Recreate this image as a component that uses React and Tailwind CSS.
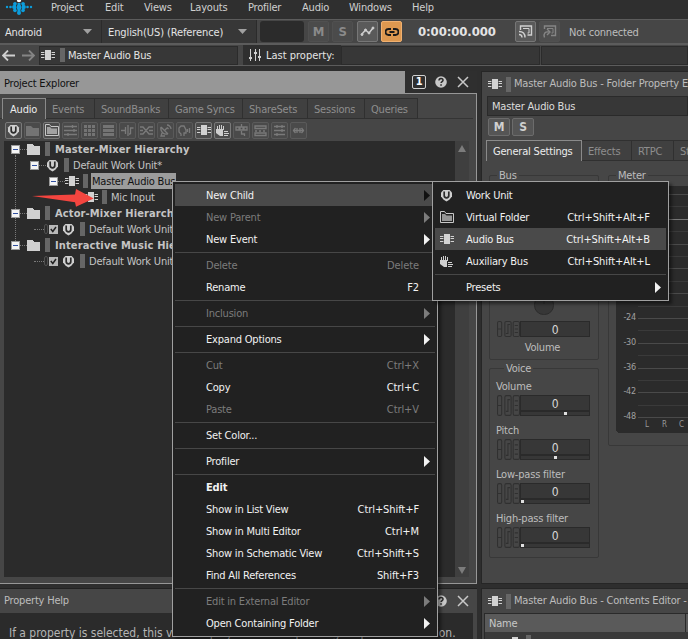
import React from 'react';
import clsx from 'clsx';

const BusIcon = ({ className = 'text-[#d2d2d2]' }) => (
  <svg width="14" height="10" viewBox="0 0 14 10" fill="currentColor" shapeRendering="crispEdges" className={clsx('shrink-0', className)}>
    <path d="M4 0h6v10H4z" />
    <path d="M0 2h3v1H0zM0 4h3v1H0zM0 7h3v1H0zM11 2h3v1h-3zM11 4h3v1h-3zM11 7h3v1h-3z" />
    <path d="M3 2h1v1H3zM3 4h1v1H3zM3 7h1v1H3zM10 2h1v1h-1zM10 4h1v1h-1zM10 7h1v1h-1z" opacity=".4" />
  </svg>
);

const WorkUnitIcon = ({ className = 'text-[#cfcfcf]' }) => (
  <svg width="13" height="13" viewBox="0 0 13 13" className={clsx('shrink-0', className)}>
    <path d="M3.4 1h6.2L12 3.600v4L9.300 10.800 6.500 12.500 3.700 10.800 1 7.600v-4z" fill="currentColor" />
    <path d="M4.200 2.500v4a2.300 2.300 0 0 0 4.600 0v-4" fill="none" stroke="#2b2b2b" strokeWidth="1.700" />
    <path d="M5.800 1h1.400v5H5.800z" fill="currentColor" />
  </svg>
);

const FolderIcon = () => (
  <svg width="14" height="12" viewBox="0 0 14 12" shapeRendering="crispEdges" className="shrink-0">
    <path d="M0 1h5l2 2h6v9H0z" fill="#d0d0d0" />
  </svg>
);

const VirtualFolderIcon = ({ className = 'text-[#c8c8c8]' }) => (
  <svg width="14" height="12" viewBox="0 0 14 12" className={clsx('shrink-0', className)}>
    <path d="M.5 11.500v-11h4l1.500 2h7.500v9z" fill="none" stroke="currentColor" />
    <path d="M2 3h3l1.500 1.500H12V10H2z" fill="currentColor" opacity=".7" />
  </svg>
);

const HandIcon = ({ className = 'text-[#cfcfcf]' }) => (
  <svg width="13" height="13" viewBox="0 0 13 13" fill="currentColor" className={clsx('shrink-0', className)}>
    <path d="M1 2h1v4H1zM3 1h1v5H3zM5 1h1v5H5zM7 2h1v4H7z" />
    <path d="M0 5h7v7H4L0 9z" />
    <path d="M8 7h4v1H8zM8 9h5v1H8zM8 11h4v1H8z" />
  </svg>
);

const toolPaths = {
  mixer: 'M0 2.500h13M0 6.500h13M0 10.500h13M8.500 1v3M10 5v3M4 9v3',
  notes: 'M0 6.500h4M4.500 3v7M7 1v11M9.500 10V4h3M9.500 10H8',
  cross: 'M0 3h3l6 7h4M0 10h3l6-7h4M0 6.500h3M9 6.500h4',
  dish: 'M2 3c-1 5 3 8 7 7M2 3l7 7M6 6l2-2M8 1c2 0 4 2 4 4M8 3.500l1.500 1.500M3 9l-1 3h4',
  voice: 'M6 12V9h2V6L6 2H3L1 4v4l2 2v2M9.500 5v3M11.500 4v5',
  nodes: 'M1 3h3v3H1zM5 3h3v3H5zM9 3h3v3H9zM6.500 0v3M6.500 7v3h3v2',
  split: 'M1 2h11v2.500H1zM1 9h11v2.500H1zM1 7h2M5 7h2M9 7h2',
  faders: 'M1 2.500h11M1 6.500h11M1 10.500h11M4 1v3M9 5v3M4 9v3M9 1v3',
  arrows: 'M1 6.500h11M3.500 4L1.500 6.500 3.500 9M9.500 4l2 2.500L9.500 9M5 4v5M8 4v5',
};

const ToolGlyph = ({ name }) => (
  <svg width="13" height="13" viewBox="0 0 13 13" fill="none" stroke="currentColor" strokeWidth="1.300" className="shrink-0 text-[#7a7a7a]">
    <path d={toolPaths[name]} />
  </svg>
);

const GridGlyph = () => (
  <svg width="13" height="13" viewBox="0 0 13 13" fill="#747474" shapeRendering="crispEdges">
    {[1, 5, 9].map((y) => [1, 5, 9].map((x) => <rect key={`${x}-${y}`} x={x} y={y} width="3" height="3" />))}
  </svg>
);

const RowsGlyph = () => (
  <svg width="13" height="13" viewBox="0 0 13 13" fill="#747474" shapeRendering="crispEdges">
    <path d="M1 1h11v3H1zM1 5h11v3H1zM1 9h11v3H1z" />
  </svg>
);

const HelpIcon = () => (
  <svg width="12" height="12" viewBox="0 0 13 13" className="shrink-0">
    <circle cx="6.500" cy="6.500" r="6.300" fill="#c8c8c8" />
    <path d="M4.300 5c0-3 4.400-3 4.400-.4 0 1.500-2.100 1.500-2.100 3.100" fill="none" stroke="#2b2b2b" strokeWidth="1.600" />
    <path d="M5.700 9h1.700v1.600H5.700z" fill="#2b2b2b" />
  </svg>
);

const CloseIcon = () => (
  <svg width="12" height="12" viewBox="0 0 12 12" className="shrink-0">
    <path d="M1 1l10 10M11 1L1 11" stroke="#c8c8c8" strokeWidth="1.500" />
  </svg>
);

const Logo = () => (
  <svg width="34" height="19" viewBox="0 0 34 19" fill="#0d9ddb">
    <circle cx="7" cy="7" r="1.200" />
    <circle cx="10.500" cy="7" r="1.300" />
    <circle cx="14" cy="7" r="1.900" />
    <path d="M13.500 3h2.500v8h-2.500z" />
    <circle cx="15" cy="3.700" r="1.800" />
    <circle cx="15" cy="10.500" r="1.800" />
    <path d="M17.500 3h3v11h-3z" />
    <circle cx="19" cy="7.200" r="2.500" />
    <circle cx="19" cy="13" r="1.900" />
    <circle cx="23" cy="3.700" r="1.800" />
    <circle cx="23" cy="10.500" r="1.800" />
    <path d="M22 3h2.500v8H22z" />
    <circle cx="24" cy="7" r="1.900" />
    <circle cx="27.500" cy="7" r="1.300" />
    <circle cx="31" cy="7" r="1.200" />
    <circle cx="19" cy="0" r="2.200" fill="#fff" />
  </svg>
);

const ColorBar = () => <span className="h-[14px] w-[5px] shrink-0 bg-[#666]" />;

const Caret = () => (
  <svg width="9" height="5" viewBox="0 0 9 5" className="shrink-0">
    <path d="M0 0h9L4.500 5z" fill="#a0a0a0" />
  </svg>
);

const menus = [
  { label: 'Project', width: 'w-[54px]' },
  { label: 'Edit', width: 'w-[39px]' },
  { label: 'Views', width: 'w-[46px]' },
  { label: 'Layouts', width: 'w-[58px]' },
  { label: 'Profiler', width: 'w-[54px]' },
  { label: 'Audio', width: 'w-[47px]' },
  { label: 'Windows', width: 'w-[63px]' },
  { label: 'Help', width: 'w-[40px]' },
];

const MenuBar = () => (
  <div className="flex h-[19px] shrink-0 bg-[#2f2f2f] text-[#cfcfcf]">
    <div className="w-[51px] shrink-0">
      <Logo />
    </div>
    {menus.map((m) => (
      <span key={m.label} className={clsx('shrink-0 leading-[16px]', m.width)}>
        {m.label}
      </span>
    ))}
  </div>
);

const SquareButton = ({ children, className }) => (
  <div className={clsx('flex shrink-0 items-center justify-center rounded-[2px] border', className)}>{children}</div>
);

const Toolbar = () => (
  <div className="flex h-[26px] shrink-0 items-start border-t border-b-2 border-t-[#5c5c5c] border-b-[#5c5c5c] bg-[#464646]">
    <div className="flex h-[23px] w-[102px] shrink-0 items-center justify-between border-r border-[#2b2b2b] bg-[#373737] pr-[9px] pl-[5px] text-[#e4e4e4]">
      <span className="pt-[3px]">Android</span>
      <Caret />
    </div>
    <div className="flex h-[23px] w-[155px] shrink-0 items-center justify-between border-r border-[#2b2b2b] bg-[#373737] pr-[9px] pl-[6px] text-[#e4e4e4]">
      <span className="pt-[3px] tracking-[-0.1px]">English(US) (Reference)</span>
      <Caret />
    </div>
    <div className="mt-px ml-[3px] h-[21px] w-[44px] shrink-0 rounded-[3px] bg-[#2b2b2b]" />
    <SquareButton className="mt-px ml-1 h-[21px] w-[21px] border-[#505050] bg-[#4b4b4b] text-[13px] font-bold text-[#8a8a8a]">M</SquareButton>
    <SquareButton className="mt-px ml-[3px] h-[21px] w-[21px] border-[#505050] bg-[#4b4b4b] text-[13px] font-bold text-[#8a8a8a]">S</SquareButton>
    <SquareButton className="mt-px ml-[4px] h-[21px] w-[21px] border-[#777] bg-[#5a5a5a]">
      <svg width="15" height="11" viewBox="0 0 15 11" fill="#d0d0d0" stroke="#d0d0d0">
        <path d="M2 8l3.500-4L9 7l4-5" fill="none" strokeWidth="1.500" />
        <circle cx="2" cy="8.500" r="1" />
        <circle cx="5.500" cy="4" r="1" />
        <circle cx="9" cy="7" r="1" />
        <circle cx="13" cy="2" r="1" />
      </svg>
    </SquareButton>
    <SquareButton className="mt-px ml-[3px] h-[21px] w-[21px] border-[#f0b070] bg-[#dd9850]">
      <svg width="14" height="8" viewBox="0 0 14 8" fill="none" stroke="#1a1a1a" strokeWidth="1.800">
        <path d="M6 1H3.500a2.700 2.700 0 0 0 0 6H6M8 1h2.500a2.700 2.700 0 0 1 0 6H8M4.500 4h5" />
      </svg>
    </SquareButton>
    <span className="ml-[16px] w-[96px] shrink-0 text-[13px] leading-[24px] font-bold tracking-[-0.1px] text-[#e4e4e4]">0:00:00.000</span>
    <SquareButton className="mt-px ml-px h-[21px] w-[21px] border-[#777] bg-[#5a5a5a]">
      <svg width="15" height="13" viewBox="0 0 15 13" fill="none" stroke="#d0d0d0" strokeWidth="1.400">
        <path d="M2.500 5V1h11v9H9.500" />
        <path d="M5 3.500h6v4.500H9.500" strokeWidth="1" />
        <path d="M1 6.500c4 0 6 2.500 6 6M1 9.500c2 0 3 1 3 3" />
      </svg>
    </SquareButton>
    <SquareButton className="mt-px ml-[3px] h-[21px] w-[21px] border-[#505050] bg-[#4e4e4e]">
      <svg width="15" height="13" viewBox="0 0 15 13" fill="none" stroke="#858585" strokeWidth="1.400">
        <path d="M2.500 4V1h11v9.500H9" />
        <path d="M5 3.500h6v4.500H9.500" strokeWidth="1" />
        <path d="M2.500 12.500c-1.500-4 1-6 4-5.500M5 4l3 3-3 3" />
      </svg>
    </SquareButton>
    <span className="ml-[9px] leading-[25px] whitespace-nowrap text-[#bdbdbd]">Not connected</span>
  </div>
);

const NavArrow = ({ flip, className }) => (
  <svg width="13" height="11" viewBox="0 0 13 11" fill="none" stroke="currentColor" strokeWidth="1.800" className={clsx('shrink-0', flip && 'rotate-180', className)}>
    <path d="M6 .5L1 5.500l5 5M1 5.500h12" />
  </svg>
);

const SelectionBar = () => (
  <div className="flex h-[21px] shrink-0 items-center border-b border-[#5c5c5c] bg-[#464646]">
    <NavArrow className="ml-[2px] text-[#d0d0d0]" />
    <NavArrow flip className="ml-[7px] text-[#858585]" />
    <div className="ml-[4px] flex h-[19px] w-[199px] shrink-0 items-center border border-[#2b2b2b] bg-[#373737] pl-px text-[#e4e4e4]">
      <BusIcon />
      <span className="ml-[5px] h-[14px] w-[5px] shrink-0 bg-[#666]" />
      <span className="ml-[3px] pt-[2px]">Master Audio Bus</span>
    </div>
    <div className="ml-[5px] flex h-[20px] w-[98px] shrink-0 items-center bg-[#2f2f2f] pl-[6px] text-[#e4e4e4]">
      <svg width="12" height="12" viewBox="0 0 12 12" stroke="#d0d0d0" strokeWidth="1" shapeRendering="crispEdges">
        <path d="M1.500 0v12M6 0v12M10.500 0v12" />
        <path d="M0 8.500h3M4.500 3.500h3M9 7.500h3" strokeWidth="2" />
      </svg>
      <span className="ml-[5px] pt-[3px] tracking-[0px] whitespace-nowrap">Last property:</span>
    </div>
    <div className="h-[19px] w-[199px] shrink-0 border border-[#2b2b2b] bg-[#373737]" />
    <div className="ml-px h-[19px] flex-1 border border-[#2b2b2b] bg-[#373737]" />
  </div>
);

const explorerTabs = [
  { label: 'Events', width: 'w-[49px]' },
  { label: 'SoundBanks', width: 'w-[74px]' },
  { label: 'Game Syncs', width: 'w-[74px]' },
  { label: 'ShareSets', width: 'w-[65px]' },
  { label: 'Sessions', width: 'w-[57px]' },
  { label: 'Queries', width: 'w-[53px]' },
];

const tools = [
  { id: 'work', on: true, icon: <WorkUnitIcon /> },
  { id: 'folder', icon: <svg width="13" height="13" viewBox="0 0 13 13"><path d="M0 2h5l2 2h6v8H0z" fill="#747474" /></svg> },
  { id: 'virtual', on: true, icon: <VirtualFolderIcon /> },
  { id: 'mixer', icon: <ToolGlyph name="mixer" /> },
  { id: 'grid', icon: <GridGlyph /> },
  { id: 'rows', icon: <RowsGlyph /> },
  { id: 'notes', icon: <ToolGlyph name="notes" /> },
  { id: 'cross', icon: <ToolGlyph name="cross" /> },
  { id: 'dish', icon: <ToolGlyph name="dish" /> },
  { id: 'voice', icon: <ToolGlyph name="voice" /> },
  { id: 'bus', on: true, icon: <BusIcon /> },
  { id: 'aux', on: true, icon: <HandIcon /> },
  { id: 'nodes', icon: <ToolGlyph name="nodes" /> },
  { id: 'split', icon: <ToolGlyph name="split" /> },
  { id: 'faders', icon: <ToolGlyph name="faders" /> },
  { id: 'arrows', icon: <ToolGlyph name="arrows" /> },
];

const Expander = () => (
  <svg width="9" height="9" viewBox="0 0 9 9" shapeRendering="crispEdges" className="relative shrink-0">
    <path d="M0 0h9v9H0z" fill="#9a9a9a" />
    <path d="M1 1h7v7H1z" fill="#f4f4f4" />
    <path d="M2 4h5v1H2z" fill="#2f4fa0" />
  </svg>
);

const Dots = ({ className }) => <span className={clsx('h-px shrink-0 border-t border-dotted border-[#7a7a7a]', className)} />;

const CheckBox = () => (
  <svg width="14" height="11" viewBox="0 0 14 11" className="shrink-0">
    <rect x=".5" y=".5" width="3" height="9" rx="1.500" fill="none" stroke="#505050" />
    <rect x="5" y="1" width="9" height="9" fill="#b8b8b8" />
    <path d="M6.800 5l2 2.500L12 3" fill="none" stroke="#222" strokeWidth="1.500" />
  </svg>
);

const TreeRow = ({ indent, icon, label, bold, selected, check, lead = true }) => (
  <div className={clsx('flex h-[16px] items-center', indent)}>
    {check ? (
      <>
        <Dots className="w-[10px]" />
        <CheckBox />
        <span className="w-[4px]" />
      </>
    ) : (
      <>
        {lead ? <Expander /> : <span className="w-[9px]" />}
        <Dots className="w-[7px]" />
      </>
    )}
    <span className="flex w-[15px] shrink-0">{icon}</span>
    <span className="ml-[3px] flex">
      <ColorBar />
    </span>
    <span
      className={clsx(
        'h-[16px] px-px leading-[18px] whitespace-nowrap',
        bold ? 'ml-[4px] font-bold tracking-[0.13px]' : 'ml-[3px]',
        selected ? 'bg-[#9c9c9c] text-[#111]' : 'text-[#c4c4c4]'
      )}
    >
      {label}
    </span>
  </div>
);

const ScrollArrow = ({ down }) => (
  <svg width="8" height="7" viewBox="0 0 8 7" className={clsx('shrink-0', down && 'rotate-180')}>
    <path d="M4 0l4 7H0z" fill="#7c7c7c" />
  </svg>
);

const Explorer = () => (
  <div className="flex h-[513px] shrink-0 flex-col">
    <div className="flex h-[22px] shrink-0">
      <div className="flex w-[405px] items-center bg-[#979797] pl-[4px] text-[#111]">
        <span className="pt-[4px]">Project Explorer</span>
      </div>
      <div className="flex flex-1 items-center bg-[#2f2f2f] pl-[7px]">
        <span className="flex h-[14px] w-[14px] items-center justify-center rounded-[2px] border border-[#d0d0d0] text-[11px] font-bold text-white">1</span>
        <span className="ml-[9px]">
          <HelpIcon />
        </span>
        <span className="ml-[10px]">
          <CloseIcon />
        </span>
      </div>
    </div>
    <div className="flex flex-1 flex-col border-t border-r border-b border-[#979797] bg-[#464646]">
      <div className="mt-[4px] flex h-[21px] shrink-0">
        <div className="w-[2px] border-b border-[#343434]" />
        <div className="w-[44px] border-t border-r border-l border-[#8a8a8a] pl-[7px] leading-[21px] text-[#ececec]">Audio</div>
        {explorerTabs.map((t) => (
          <div key={t.label} className={clsx('border-t border-r border-b border-[#303030] bg-[#404040] pl-[6px] leading-[21px] whitespace-nowrap text-[#8e8e8e]', t.width)}>
            {t.label}
          </div>
        ))}
        <div className="mr-[3px] flex-1 border-b border-[#343434]" />
      </div>
      <div className="flex h-[22px] shrink-0 items-center gap-[2px] pl-[5px]">
        {tools.map((t) => (
          <div
            key={t.id}
            className={clsx(
              'flex h-[17px] w-[17px] shrink-0 items-center justify-center overflow-hidden rounded-[2px] border',
              t.on ? 'border-[#7a7a7a] bg-[#4c4c4c]' : 'border-[#5a5a5a] bg-[#4a4a4a]'
            )}
          >
            {t.icon}
          </div>
        ))}
      </div>
      <div className="mr-[7px] mb-[6px] ml-[4px] flex flex-1 bg-[#2b2b2b]">
        <div className="relative flex-1">
          <span className="absolute top-[14px] left-[11px] h-[86px] border-l border-dotted border-[#7a7a7a]" />
          <TreeRow indent="pl-[7px]" icon={<FolderIcon />} label="Master-Mixer Hierarchy" bold />
          <TreeRow indent="pl-[26px]" icon={<WorkUnitIcon />} label="Default Work Unit*" />
          <TreeRow indent="pl-[45px]" icon={<BusIcon />} label="Master Audio Bus" selected />
          <TreeRow indent="pl-[64px]" icon={<BusIcon />} label="Mic Input" lead={false} />
          <TreeRow indent="pl-[7px]" icon={<FolderIcon />} label="Actor-Mixer Hierarchy" bold />
          <TreeRow indent="pl-[30px]" icon={<WorkUnitIcon />} label="Default Work Unit" check />
          <TreeRow indent="pl-[7px]" icon={<FolderIcon />} label="Interactive Music Hierarchy" bold />
          <TreeRow indent="pl-[30px]" icon={<WorkUnitIcon />} label="Default Work Unit" check />
        </div>
        <div className="flex w-[14px] flex-col items-center justify-between bg-[#3f3f3f] pt-[4px] pb-[3px]">
          <ScrollArrow />
          <ScrollArrow down />
        </div>
      </div>
    </div>
  </div>
);

const PropertyHelp = () => (
  <div className="mt-[4px] flex min-h-0 flex-1 flex-col border-t border-[#222] bg-[#464646]">
    <div className="flex h-[24px] shrink-0 items-center justify-between pr-[8px] pl-[4px] text-[#bdbdbd]">
      Property Help
      <span className="flex gap-[10px]">
        <HelpIcon />
        <CloseIcon />
      </span>
    </div>
    <div className="mr-[4px] flex-1 overflow-hidden bg-[#2b2b2b] pt-[11px] pl-[9px] text-[12px] leading-[18px] tracking-[-0.02px] whitespace-nowrap text-[#b4b4b4]">
      If a property is selected, this view displays the corresponding Help documentation.
    </div>
  </div>
);

const PanelTitle = ({ children }) => (
  <div className="flex h-[24px] shrink-0 items-center overflow-hidden pl-[6px] text-[#bdbdbd]">
    <BusIcon />
    <span className="ml-[4px] h-[15px] w-[5px] shrink-0 bg-[#666]" />
    <span className="ml-[3px] whitespace-nowrap">{children}</span>
  </div>
);

const Links = () => (
  <svg width="22" height="18" viewBox="0 0 22 18" fill="none" stroke="#303030" preserveAspectRatio="none" className="h-full w-[23px] shrink-0">
    <rect x=".5" y=".5" width="4" height="17" rx="1.500" />
    <path d="M1 9h3.500M8.500 14h2V4h2M17 5h3M17 9h3M17 13h3" />
    <rect x="7.500" y=".5" width="6" height="17" rx="1.500" />
    <rect x="15.500" y=".5" width="6" height="17" rx="1.500" />
  </svg>
);

const Param = ({ label, knob, className }) => (
  <div className={className}>
    <div className="-ml-px h-[16px] leading-[15px] text-[#bdbdbd]">{label}</div>
    <div className="flex h-[21px]">
      <Links />
      <div className="flex w-[70px] flex-col border border-[#2a2a2a] bg-[#373737]">
        <div className="h-[16px] border-b-2 border-[#2a2a2a] text-center text-[12px] leading-[16px] text-[#d8d8d8]">0</div>
        <div className={clsx('h-[3px] w-[3px] bg-[#e0e0e0]', knob)} />
      </div>
    </div>
  </div>
);

const Group = ({ label, className, children }) => (
  <fieldset className={clsx('rounded-[2px] border border-[#383838]', className)}>
    <legend className="ml-[7px] h-[14px] px-[2px] leading-[16px] text-[#bdbdbd]">{label}</legend>
    {children}
  </fieldset>
);

const marks = ['', '', '', '', '', '', '', '', '', '', '-24', '', '-30', '', '-36', '', '-42', '', '-48'];

const Meter = () => (
  <svg width="72" height="247" viewBox="0 0 72 247" className="mt-[4px] ml-[7px] block" fontSize="9" shapeRendering="crispEdges">
    <path d="M0 0h72v247H4a4 4 0 0 1-4-4z" fill="#2b2b2b" />
    {marks.map((m, i) => {
      const y = Math.round(8 + i * 12.4);
      return (
        <g key={i}>
          <rect x="22" y={y} width="50" height="1" fill={i === 2 ? '#777' : i % 2 ? '#3a3a3a' : '#4a4a4a'} />
          {m && (
            <text x="20" y={y + 2} textAnchor="end" fill="#a0a0a0">
              {m}
            </text>
          )}
        </g>
      );
    })}
    <g fill="#999" fontSize="8">
      <text x="29" y="241">L</text>
      <text x="46" y="241">R</text>
      <text x="63" y="241">C</text>
    </g>
  </svg>
);

const PropertyEditor = () => (
  <div className="flex h-[513px] shrink-0 flex-col border border-r-0 border-[#262626] bg-[#464646]">
    <PanelTitle>Master Audio Bus - Folder Property Editor</PanelTitle>
    <div className="ml-[5px] h-[20px] shrink-0 border border-[#2a2a2a] bg-[#373737] pl-[4px] leading-[19px] text-[#dcdcdc]">Master Audio Bus</div>
    <div className="mt-[2px] ml-[6px] flex shrink-0 gap-[2px] text-[12px] font-bold text-[#d0d0d0]">
      <SquareButton className="h-[18px] w-[22px] border-[#6c6c6c] bg-[#555]">M</SquareButton>
      <SquareButton className="h-[18px] w-[22px] border-[#6c6c6c] bg-[#555]">S</SquareButton>
    </div>
    <div className="mt-[4px] ml-[4px] flex h-[21px] shrink-0 overflow-hidden whitespace-nowrap text-[#8e8e8e]">
      <div className="w-[96px] shrink-0 border-t border-r border-l border-[#8a8a8a] pl-[6px] leading-[21px] text-[#ececec]">General Settings</div>
      <div className="w-[50px] shrink-0 border-t border-r border-b border-[#303030] bg-[#404040] pl-[6px] leading-[21px]">Effects</div>
      <div className="w-[42px] shrink-0 border-t border-r border-b border-[#303030] bg-[#404040] pl-[6px] leading-[21px]">RTPC</div>
      <div className="flex-1 border-t border-b border-[#303030] bg-[#404040] pl-[6px] leading-[21px]">States</div>
    </div>
    <div className="flex min-h-0 flex-1 gap-[9px] overflow-hidden pt-[7px] pl-[7px]">
      <div className="w-[110px] shrink-0">
        <Group label="Bus" className="h-[192px]">
          <div className="flex h-full flex-col justify-end px-[7px]">
            <svg width="20" height="32" viewBox="0 0 20 32" className="ml-[37px] shrink-0">
              <rect x=".5" y="12.500" width="19" height="19" rx="9" fill="#373737" stroke="#2c2c2c" />
              <path d="M10 13v8" stroke="#2a2a2a" />
            </svg>
            <div className="mt-[6px] flex h-[16px] shrink-0">
              <Links />
              <div className="w-[70px] border border-[#2a2a2a] bg-[#373737] text-center text-[12px] leading-[17px] text-[#d8d8d8]">0</div>
            </div>
            <div className="mt-[3px] mb-[3px] -ml-[3px] shrink-0 text-center leading-[16px] text-[#bdbdbd]">Volume</div>
          </div>
        </Group>
        <Group label="Voice" className="mt-px h-[197px] px-[7px]">
          <Param label="Volume" knob="ml-[43px]" className="mt-[4px]" />
          <Param label="Pitch" knob="ml-[33px]" className="mt-[7px]" />
          <Param label="Low-pass filter" knob="ml-0" className="mt-[7px]" />
          <Param label="High-pass filter" knob="ml-0" className="mt-[7px]" />
        </Group>
      </div>
      <Group label="Meter" className="h-[278px] w-[90px] shrink-0">
        <Meter />
      </Group>
    </div>
  </div>
);

const ContentsEditor = () => (
  <div className="mt-[4px] flex min-h-0 flex-1 flex-col overflow-hidden border-t border-l border-[#262626] bg-[#464646]">
    <PanelTitle>Master Audio Bus - Contents Editor - Default</PanelTitle>
    <div className="ml-[2px] flex flex-1 flex-col border-t border-l border-[#2a2a2a] bg-[#3a3a3a]">
      <div className="flex h-[18px] shrink-0 bg-[#5a5a5a] text-[#c8c8c8]">
        <span className="w-[201px] shrink-0 border-r border-[#2a2a2a] pl-[4px] leading-[19px]">Name</span>
      </div>
      <div className="flex pt-[5px] pl-[23px]">
        <BusIcon />
        <span className="-mt-[2px] ml-[4px]">
          <span className="block h-[12px] w-[5px] bg-[#666]" />
        </span>
      </div>
    </div>
  </div>
);

const contextItems = [
  { label: 'New Child', arrow: true, active: true },
  { label: 'New Parent', arrow: true, disabled: true },
  { label: 'New Event', arrow: true },
  null,
  { label: 'Delete', keys: 'Delete', disabled: true },
  { label: 'Rename', keys: 'F2' },
  null,
  { label: 'Inclusion', arrow: true, disabled: true },
  null,
  { label: 'Expand Options', arrow: true },
  null,
  { label: 'Cut', keys: 'Ctrl+X', disabled: true },
  { label: 'Copy', keys: 'Ctrl+C' },
  { label: 'Paste', keys: 'Ctrl+V', disabled: true },
  null,
  { label: 'Set Color...' },
  null,
  { label: 'Profiler', arrow: true },
  null,
  { label: 'Edit', bold: true },
  { label: 'Show in List View', keys: 'Ctrl+Shift+F' },
  { label: 'Show in Multi Editor', keys: 'Ctrl+M' },
  { label: 'Show in Schematic View', keys: 'Ctrl+Shift+S' },
  { label: 'Find All References', keys: 'Shift+F3' },
  null,
  { label: 'Edit in External Editor', arrow: true, disabled: true },
  { label: 'Open Containing Folder', arrow: true },
];

const childItems = [
  { label: 'Work Unit', icon: <WorkUnitIcon /> },
  { label: 'Virtual Folder', keys: 'Ctrl+Shift+Alt+F', icon: <VirtualFolderIcon /> },
  { label: 'Audio Bus', keys: 'Ctrl+Shift+Alt+B', icon: <BusIcon />, active: true },
  { label: 'Auxiliary Bus', keys: 'Ctrl+Shift+Alt+L', icon: <HandIcon /> },
  null,
  { label: 'Presets', arrow: true },
];

const PopupMenu = ({ items, className }) => (
  <div className={clsx('absolute border border-[#a0a0a0] bg-[#212121] p-[2px] shadow-[3px_3px_3px_rgba(0,0,0,0.45)]', className)}>
    {items.map((item, i) =>
      item ? (
        <div
          key={item.label}
          className={clsx(
            'flex h-[22px] items-center whitespace-nowrap',
            item.active && 'bg-[#4a4a4a]',
            item.disabled ? 'text-[#7c7c7c]' : 'text-[#f2f2f2]'
          )}
        >
          <span className="flex w-[31px] shrink-0 justify-center pr-[8px]">{item.icon}</span>
          <span className={clsx('flex-1 pt-[2px]', item.bold && 'font-bold')}>{item.label}</span>
          <span className={item.arrow ? 'hidden' : 'mr-[16px] pt-[2px] tracking-[-0.08px]'}>{item.keys}</span>
          {item.arrow && (
            <svg width="6" height="11" viewBox="0 0 6 11" className={clsx('mr-[5px]', item.active && 'text-[#111]')}>
              <path d="M0 0l6 5.500L0 11z" fill="currentColor" />
            </svg>
          )}
        </div>
      ) : (
        <div key={i} className="flex h-[4px] items-center">
          <span className="h-px w-full bg-[#474747]" />
        </div>
      )
    )}
  </div>
);

export default function App() {
  return (
    <div className="relative flex h-[639px] w-[688px] flex-col overflow-hidden bg-[#2e2e2e] font-['DejaVu_Sans_Condensed','DejaVu_Sans',sans-serif] text-[11px] tracking-[-0.2px]">
      <MenuBar />
      <Toolbar />
      <SelectionBar />
      <div className="mt-[5px] flex min-h-0 flex-1">
        <div className="flex w-[477px] shrink-0 flex-col">
          <Explorer />
          <PropertyHelp />
        </div>
        <div className="ml-[4px] flex min-w-0 flex-1 flex-col">
          <PropertyEditor />
          <ContentsEditor />
        </div>
      </div>

      <svg width="62" height="20" viewBox="0 0 62 20" className="absolute top-[188px] left-[32px]">
        <path d="M0 8l43-1.500L44 1l17.700 9.500L44 18.700l-1-4.400z" fill="#f4453f" />
      </svg>
      <PopupMenu items={contextItems} className="top-[181px] left-[172px] w-[266px]" />
      <PopupMenu items={childItems} className="top-[181px] left-[432px] w-[237px]" />
    </div>
  );
}
